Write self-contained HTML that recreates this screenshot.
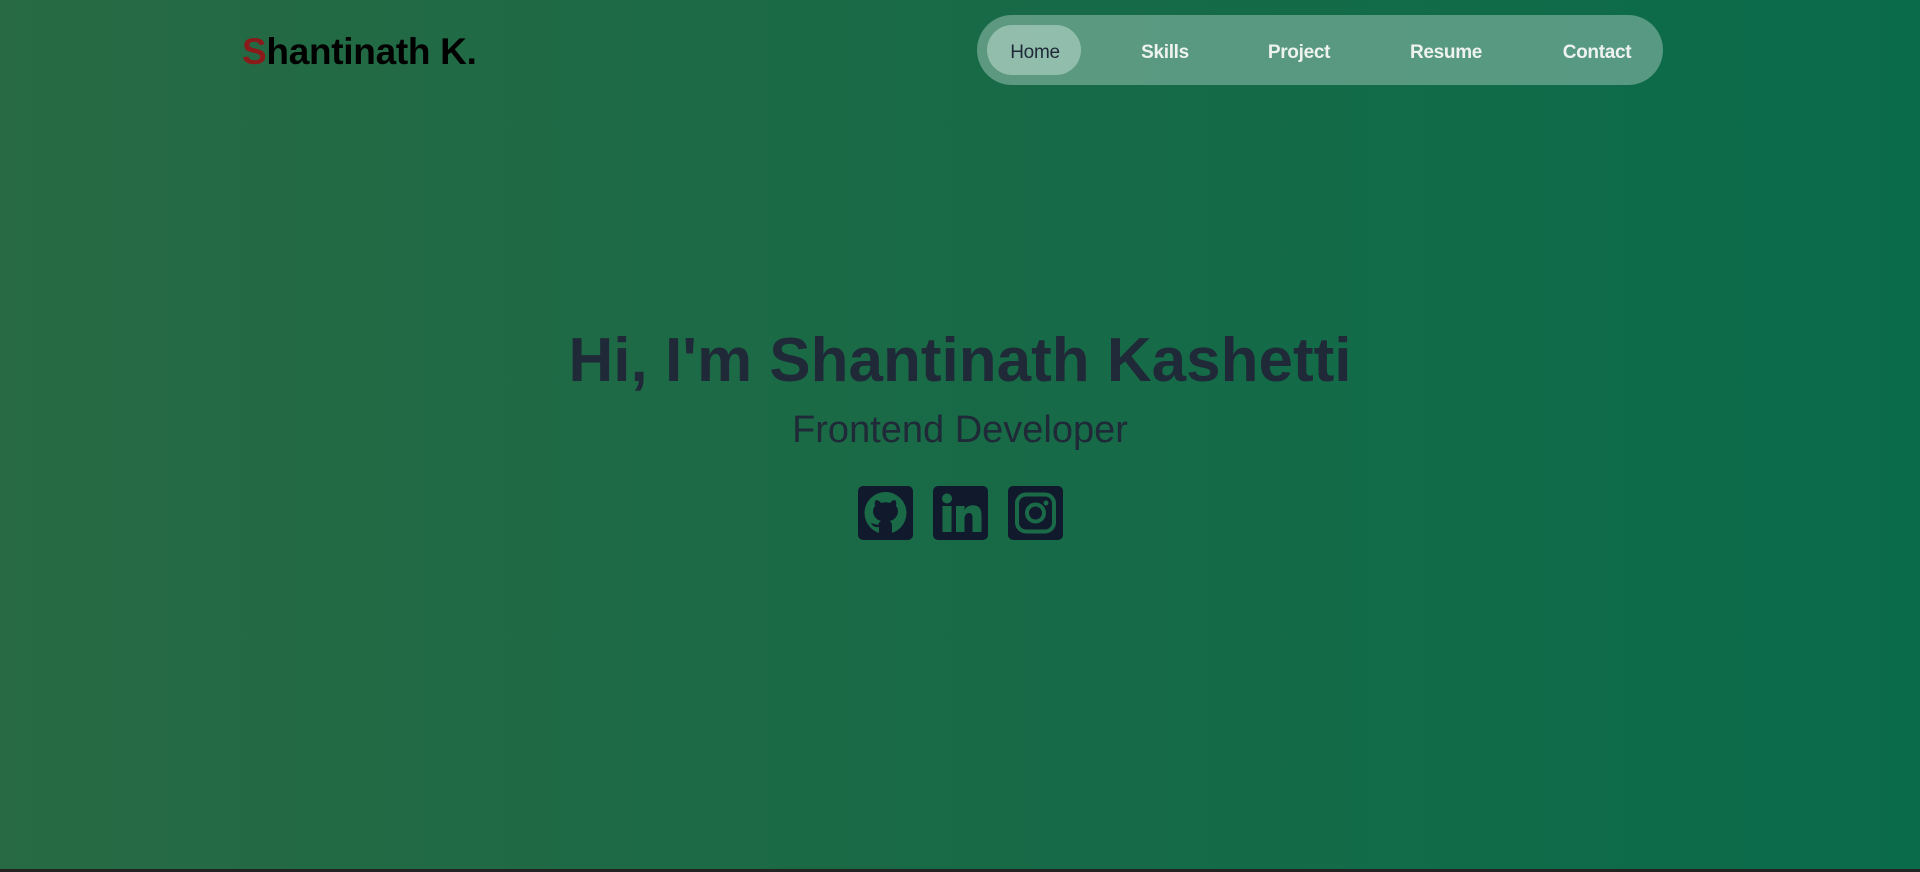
<!DOCTYPE html>
<html><head><meta charset="utf-8"><style>
*{margin:0;padding:0;box-sizing:border-box}
html,body{width:1920px;height:872px;overflow:hidden}
body{background:linear-gradient(90deg,#276a43 0%,#0a6b4b 100%);font-family:"Liberation Sans",sans-serif;position:relative}
.bottom{position:absolute;left:0;right:0;bottom:0;height:3px;background:#232323}
.logo{position:absolute;left:242px;top:31px;font-size:37px;font-weight:bold;color:#000;letter-spacing:-0.3px}
.logo span{color:#8b1a1a}
.nav{position:absolute;left:977px;top:15px;width:686px;height:70px;border-radius:35px;background:rgba(160,200,185,0.5)}
.nav a{position:absolute;top:3px;height:70px;line-height:70px;font-size:19px;font-weight:bold;color:#eef2f0;transform:translateX(-50%);text-decoration:none;letter-spacing:-0.3px}
.pill{position:absolute;left:10px;top:10px;width:94px;height:50px;border-radius:25px;background:rgba(200,225,215,0.5)}
.nav a.home{color:#1f2937;font-weight:normal}
h1{position:absolute;left:0;width:1920px;top:325px;text-align:center;font-size:62px;font-weight:bold;color:#1f2937;letter-spacing:0}
h2{position:absolute;left:0;width:1920px;top:409px;text-align:center;font-size:38px;font-weight:normal;color:#1f2937}
.ic{position:absolute;top:486px;width:55px;height:54px;background:#111a2c;border-radius:5px}
</style></head><body>
<div class="logo"><span>S</span>hantinath K.</div>
<div class="nav">
<div class="pill"></div>
<a class="home" style="left:58px">Home</a>
<a style="left:188px">Skills</a>
<a style="left:322px">Project</a>
<a style="left:469px">Resume</a>
<a style="left:620px">Contact</a>
</div>
<h1>Hi, I'm Shantinath Kashetti</h1>
<h2>Frontend Developer</h2>
<div class="ic" style="left:858px"><svg width="55" height="54" viewBox="0 0 55 54"><circle cx="27.5" cy="27" r="21" fill="#1a6a48"/><path fill="#111a2c" d="M21 48 L21 41 Q15 42 13 37 Q17 38 20 39 Q21 36 23 35 Q16 33 15 26 Q15 22 17 20 Q16 16 18 14 Q21 14 23 17 Q27.5 15.5 32 17 Q34 14 37 14 Q39 16 38 20 Q40 22 40 26 Q39 33 32 35 Q34 37 34 40 L34 48 Z"/></svg></div>
<div class="ic" style="left:933px"><svg width="55" height="54" viewBox="0 0 55 54"><circle cx="14" cy="12.5" r="5" fill="#1a6a48"/><rect x="9.5" y="20" width="9" height="26" fill="#1a6a48"/><path fill="#1a6a48" d="M23 20h8.5v4q2.5-4.7 8.5-4.7q8.5 0 8.5 10V46h-9V31.5q0-4.5-3.5-4.5t-4.5 4.5V46H23Z"/></svg></div>
<div class="ic" style="left:1008px"><svg width="55" height="54" viewBox="0 0 55 54"><rect x="9" y="8.5" width="37" height="37" rx="9" fill="none" stroke="#1a6a48" stroke-width="4"/><circle cx="27.5" cy="27" r="8.5" fill="none" stroke="#1a6a48" stroke-width="4"/><circle cx="38" cy="17" r="2.5" fill="#1a6a48"/></svg></div>
<div class="bottom"></div>
</body></html>
